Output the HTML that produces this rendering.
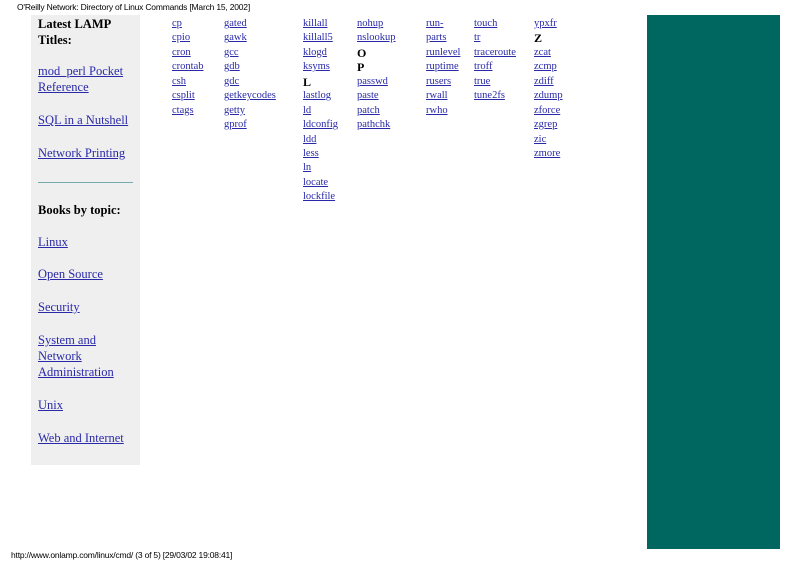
<!DOCTYPE html>
<html><head><meta charset="utf-8"><style>
body{margin:0;width:800px;height:566px;position:relative;background:#fff;font-family:"Liberation Serif",serif;overflow:hidden}
.a{position:absolute}
a{color:#2a2aa8;text-decoration:underline}
.col{position:absolute;top:17px;font-size:10.5px;white-space:nowrap}
.col>*{display:block;height:14.45px;line-height:14.45px}
.col b{color:#000;font-size:12px}
.side{position:absolute;left:31px;top:15px;width:109px;height:450px;background:#efefef}
.s{position:absolute;left:38px;font-size:12.5px;white-space:nowrap;line-height:16px}
</style></head><body>
<div class="a" style="left:17px;top:2px;font-family:'Liberation Sans',sans-serif;font-size:8.5px;letter-spacing:-0.2px">O'Reilly Network: Directory of Linux Commands [March 15, 2002]</div>
<div class="side"></div>
<div class="s" style="top:16px;font-weight:bold">Latest LAMP<br>Titles:</div>
<div class="s" style="top:63px"><a>mod_perl Pocket </a><br><a>Reference</a></div>
<div class="s" style="top:112px"><a>SQL in a Nutshell</a></div>
<div class="s" style="top:145px"><a>Network Printing</a></div>
<div class="a" style="left:38px;top:182px;width:95px;height:1px;background:#7aa"></div>
<div class="s" style="top:202px;font-weight:bold">Books by topic:</div>
<div class="s" style="top:234px"><a>Linux</a></div>
<div class="s" style="top:266px"><a>Open Source</a></div>
<div class="s" style="top:299px"><a>Security</a></div>
<div class="s" style="top:332px"><a>System and </a><br><a>Network </a><br><a>Administration</a></div>
<div class="s" style="top:397px"><a>Unix</a></div>
<div class="s" style="top:430px"><a>Web and Internet</a></div>

<div class="col" style="left:172px"><a>cp</a><a>cpio</a><a>cron</a><a>crontab</a><a>csh</a><a>csplit</a><a>ctags</a></div>
<div class="col" style="left:224px"><a>gated</a><a>gawk</a><a>gcc</a><a>gdb</a><a>gdc</a><a>getkeycodes</a><a>getty</a><a>gprof</a></div>
<div class="col" style="left:303px"><a>killall</a><a>killall5</a><a>klogd</a><a>ksyms</a><b>L</b><a>lastlog</a><a>ld</a><a>ldconfig</a><a>ldd</a><a>less</a><a>ln</a><a>locate</a><a>lockfile</a></div>
<div class="col" style="left:357px"><a>nohup</a><a>nslookup</a><b>O</b><b>P</b><a>passwd</a><a>paste</a><a>patch</a><a>pathchk</a></div>
<div class="col" style="left:426px"><a>run-</a><a>parts</a><a>runlevel</a><a>ruptime</a><a>rusers</a><a>rwall</a><a>rwho</a></div>
<div class="col" style="left:474px"><a>touch</a><a>tr</a><a>traceroute</a><a>troff</a><a>true</a><a>tune2fs</a></div>
<div class="col" style="left:534px"><a>ypxfr</a><b>Z</b><a>zcat</a><a>zcmp</a><a>zdiff</a><a>zdump</a><a>zforce</a><a>zgrep</a><a>zic</a><a>zmore</a></div>

<div class="a" style="left:647px;top:15px;width:133px;height:534px;background:#006660"></div>
<div class="a" style="left:11px;top:550px;font-family:'Liberation Sans',sans-serif;font-size:8.5px;letter-spacing:-0.2px">http://www.onlamp.com/linux/cmd/ (3 of 5) [29/03/02 19:08:41]</div>
</body></html>
